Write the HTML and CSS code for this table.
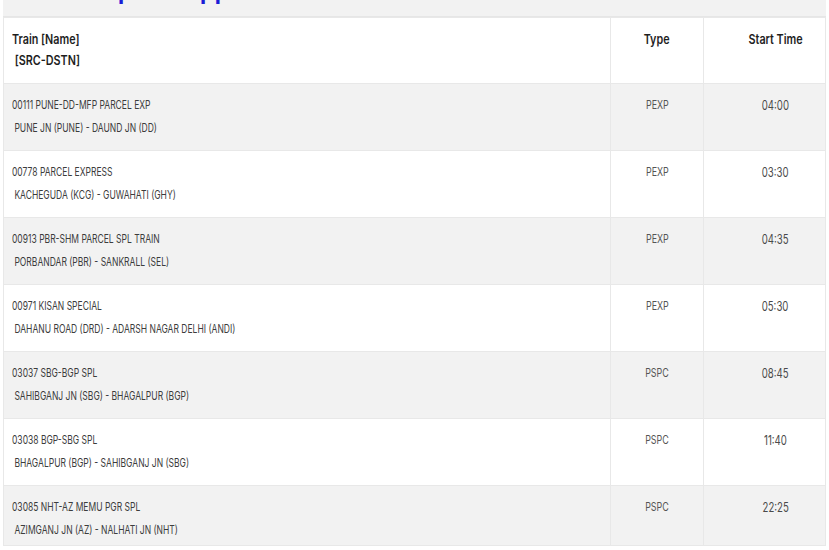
FILE: index.html
```html
<!DOCTYPE html>
<html>
<head>
<meta charset="utf-8">
<link rel="stylesheet" href="styles.css">
</head>
<body>
<div class="page">
  <div class="top">
    <div class="title">Superb App</div>
  </div>
  <table class="trains">
    <thead>
      <tr>
        <th class="c-name"><span class="sq">Train [Name]</span><br><span class="sq">&nbsp;[SRC-DSTN]</span></th>
        <th class="c-type"><span class="sq">Type</span></th>
        <th class="c-time"><span class="sq">Start Time</span></th>
      </tr>
    </thead>
    <tbody>
      <tr class="odd"><td class="c-name"><span class="sq">00111 PUNE-DD-MFP PARCEL EXP</span><br><span class="sq">&nbsp;PUNE JN (PUNE) - DAUND JN (DD)</span></td><td class="c-type"><span class="sq">PEXP</span></td><td class="c-time"><span class="sq">04:00</span></td></tr>
      <tr><td class="c-name"><span class="sq">00778 PARCEL EXPRESS</span><br><span class="sq">&nbsp;KACHEGUDA (KCG) - GUWAHATI (GHY)</span></td><td class="c-type"><span class="sq">PEXP</span></td><td class="c-time"><span class="sq">03:30</span></td></tr>
      <tr class="odd"><td class="c-name"><span class="sq">00913 PBR-SHM PARCEL SPL TRAIN</span><br><span class="sq">&nbsp;PORBANDAR (PBR) - SANKRALL (SEL)</span></td><td class="c-type"><span class="sq">PEXP</span></td><td class="c-time"><span class="sq">04:35</span></td></tr>
      <tr><td class="c-name"><span class="sq">00971 KISAN SPECIAL</span><br><span class="sq">&nbsp;DAHANU ROAD (DRD) - ADARSH NAGAR DELHI (ANDI)</span></td><td class="c-type"><span class="sq">PEXP</span></td><td class="c-time"><span class="sq">05:30</span></td></tr>
      <tr class="odd"><td class="c-name"><span class="sq">03037 SBG-BGP SPL</span><br><span class="sq">&nbsp;SAHIBGANJ JN (SBG) - BHAGALPUR (BGP)</span></td><td class="c-type"><span class="sq">PSPC</span></td><td class="c-time"><span class="sq">08:45</span></td></tr>
      <tr><td class="c-name"><span class="sq">03038 BGP-SBG SPL</span><br><span class="sq">&nbsp;BHAGALPUR (BGP) - SAHIBGANJ JN (SBG)</span></td><td class="c-type"><span class="sq">PSPC</span></td><td class="c-time"><span class="sq">11:40</span></td></tr>
      <tr class="odd last"><td class="c-name"><span class="sq">03085 NHT-AZ MEMU PGR SPL</span><br><span class="sq">&nbsp;AZIMGANJ JN (AZ) - NALHATI JN (NHT)</span></td><td class="c-type"><span class="sq">PSPC</span></td><td class="c-time"><span class="sq">22:25</span></td></tr>
    </tbody>
  </table>
</div>
</body>
</html>
```
FILE: styles.css
```css
html, body {
  margin: 0;
  padding: 0;
  background: #ffffff;
}
.page {
  width: 829px;
  height: 550px;
  overflow: hidden;
  font-family: "Inter", "Open Sans", sans-serif;
}
.top {
  margin-left: 3px;
  width: 823px;
  height: 16px;
  background: #f2f2f2;
  overflow: hidden;
  border-bottom: 1px solid #e6e6e6;
}
.title {
  margin-top: -23px;
  padding-left: 84px;
  font-family: "Liberation Sans", sans-serif;
  font-size: 24px;
  line-height: 28px;
  font-weight: bold;
  color: #1c1cd6;
  white-space: nowrap;
  word-spacing: 7px;
}
.trains {
  margin-left: 3px;
  width: 823px;
  border-collapse: collapse;
  table-layout: fixed;
}
.trains th, .trains td {
  border: 1px solid #e8e8e8;
  vertical-align: top;
}
.sq {
  display: inline-block;
  white-space: pre;
  transform: scaleX(0.74);
  transform-origin: left center;
}
.c-type .sq, .c-time .sq {
  transform-origin: center center;
}
.trains th {
  font-weight: 600;
  font-size: 13px;
  color: #1e1e1e;
  line-height: 21px;
  padding: 11px 8px 12px 8px;
  height: 42px;
  background: #ffffff;
}
.trains th .sq {
  transform: scaleX(0.83);
}
.trains td {
  font-size: 11.5px;
  color: #3c3c3c;
  line-height: 23px;
  padding: 10px 8px 10px 8px;
  height: 46px;
}
.trains tr.odd td {
  background: #f2f2f2;
}
.trains tr.last td {
  padding-bottom: 3px;
}
.trains .c-name {
  width: 590px;
  text-align: left;
}
.trains .c-type {
  width: 76px;
  text-align: center;
}
.trains .c-time {
  text-align: center;
  padding-left: 30px;
}
.trains td.c-type {
  color: #555555;
  font-size: 12px;
  line-height: 22px;
}
.trains td.c-time {
  color: #4a4a4a;
  font-size: 13px;
  line-height: 22px;
}
```
